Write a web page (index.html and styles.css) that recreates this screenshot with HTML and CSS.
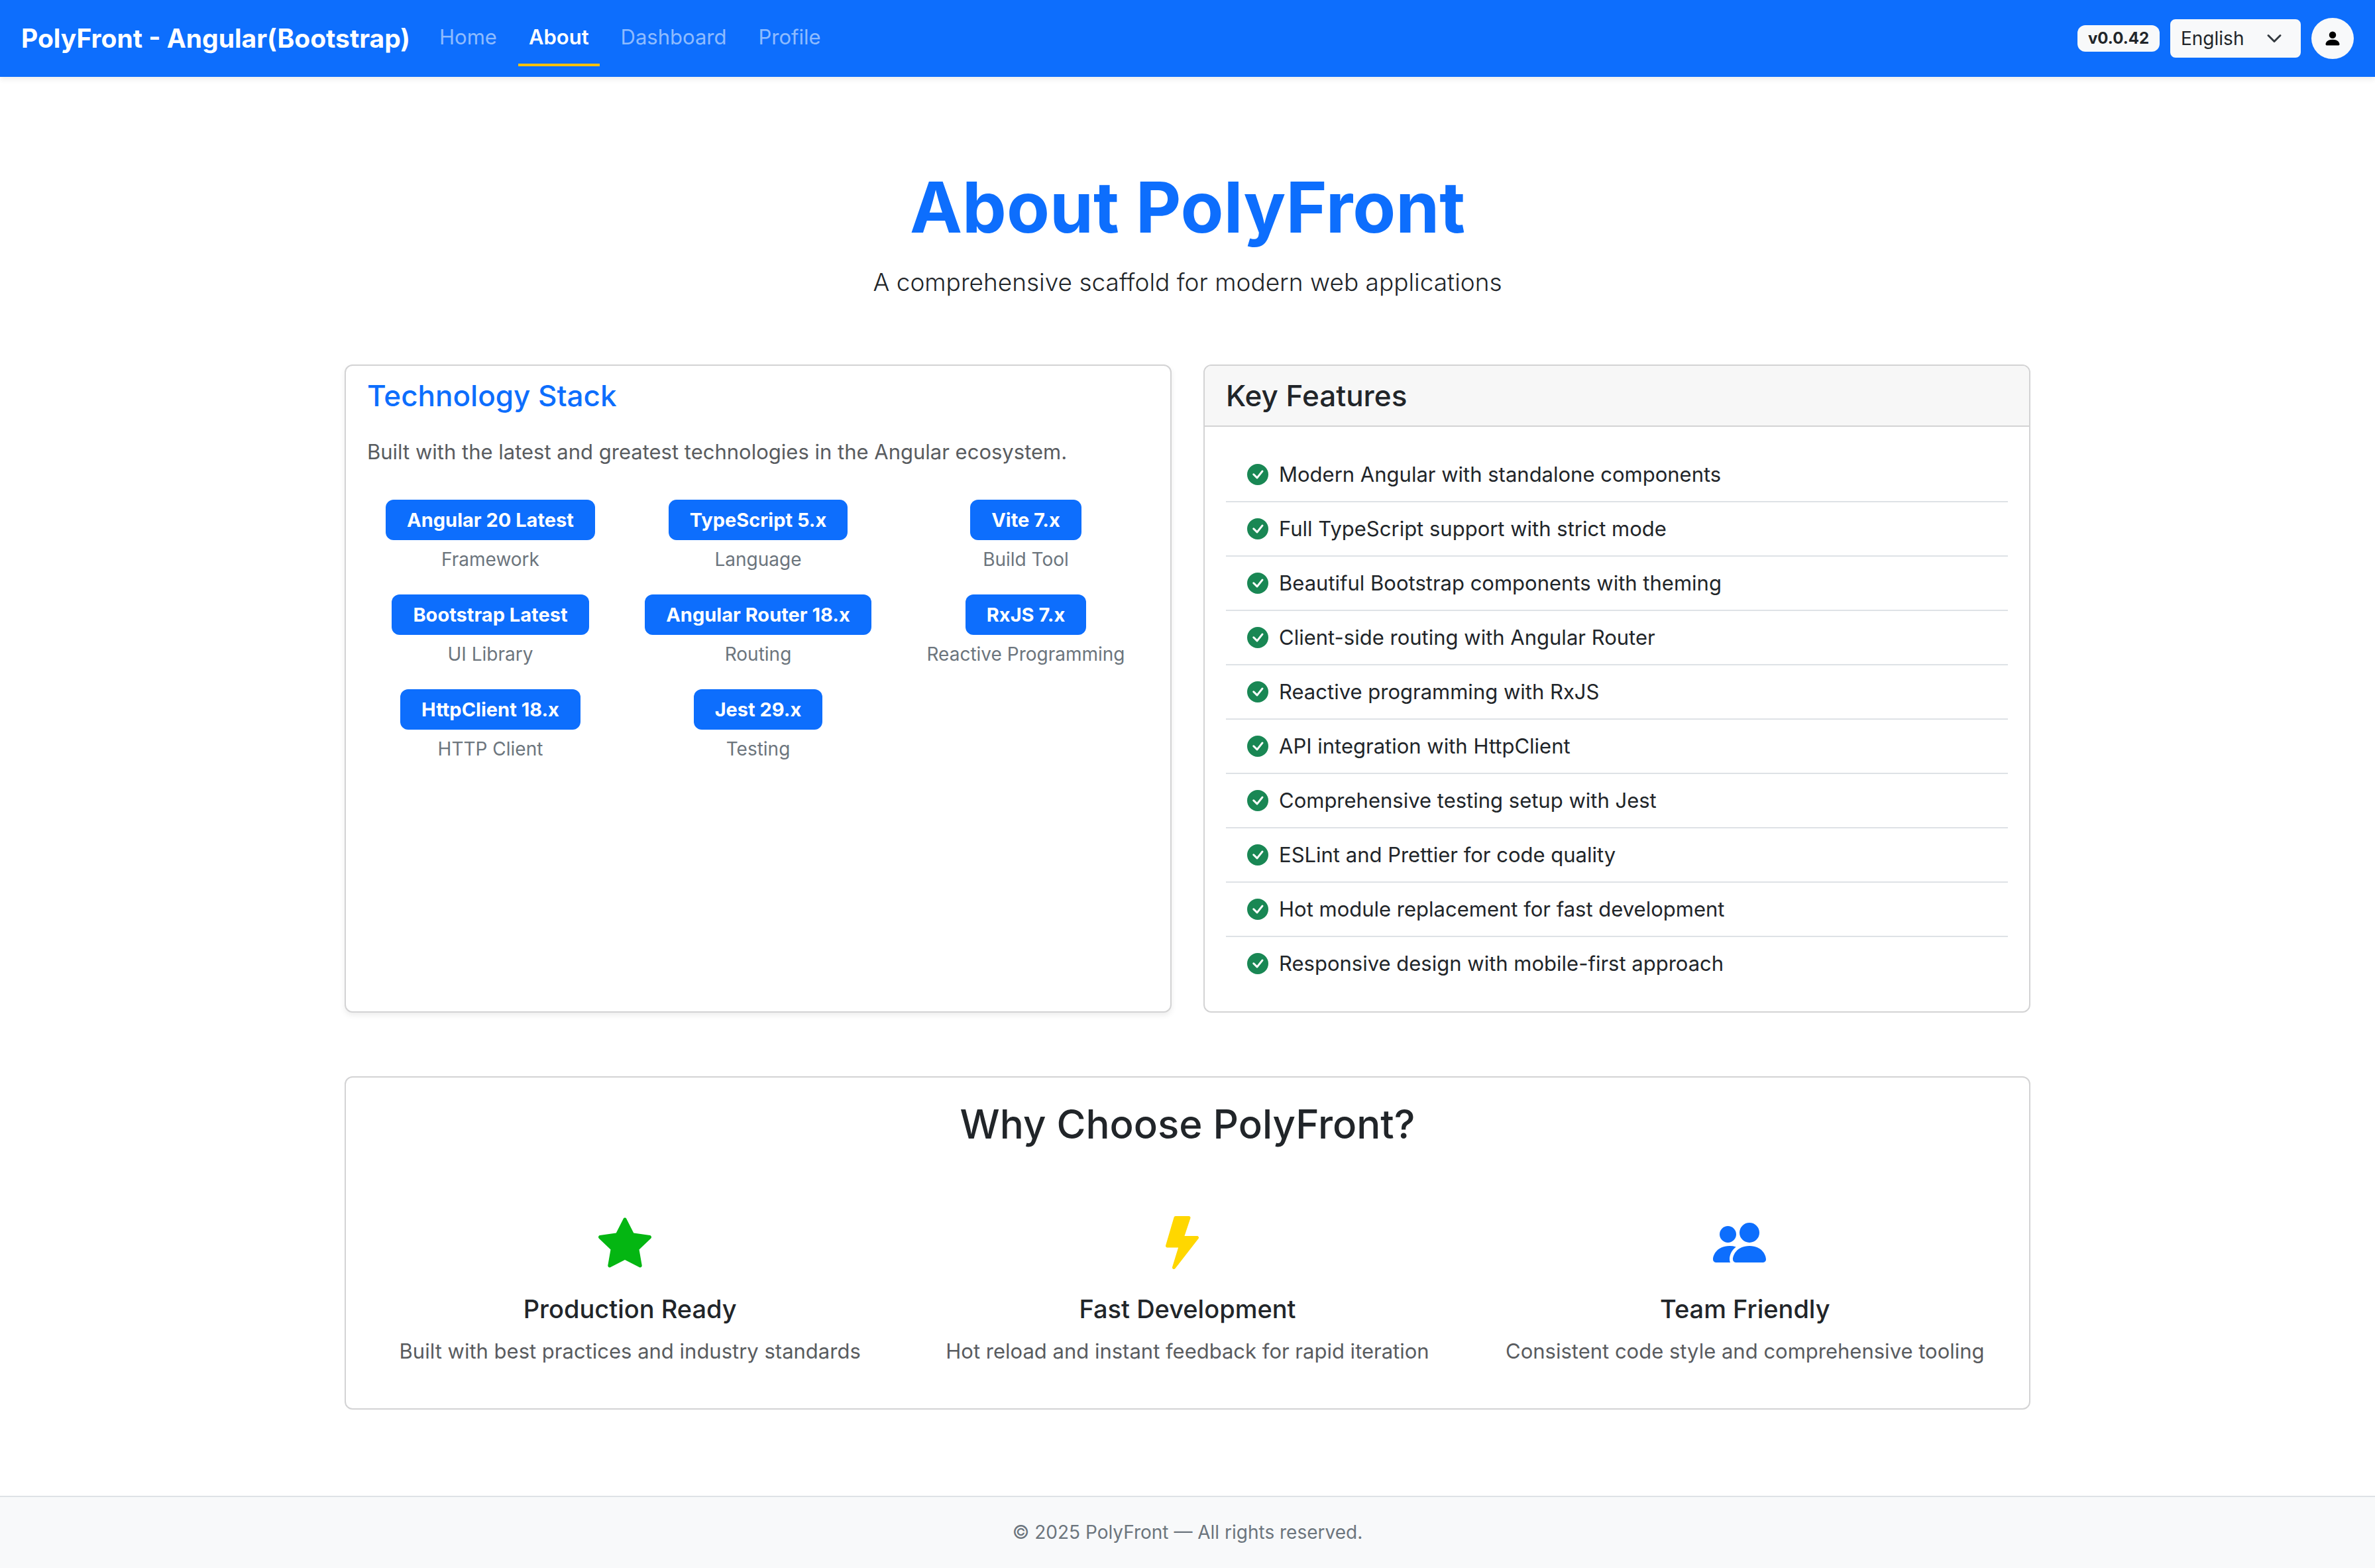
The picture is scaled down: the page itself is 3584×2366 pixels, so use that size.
FILE: index.html
```html
<!DOCTYPE html>
<html lang="en">
<head>
<meta charset="utf-8">
<meta name="viewport" content="width=device-width, initial-scale=1">
<title>About - PolyFront</title>
<link rel="stylesheet" href="styles.css">
</head>
<body>
<header class="navbar">
  <a class="brand" href="#">PolyFront - Angular(Bootstrap)</a>
  <nav class="nav" aria-label="Main">
    <a class="nav-link" href="#home">Home</a>
    <a class="nav-link active" href="#about" aria-current="page">About</a>
    <a class="nav-link" href="#dashboard">Dashboard</a>
    <a class="nav-link" href="#profile">Profile</a>
  </nav>
  <div class="tools">
    <span class="version">v0.0.42</span>
    <select class="language" aria-label="Language"><option>English</option></select>
    <button class="user" type="button" aria-label="User menu">
      <svg class="user-icon" viewBox="0 0 16 16" aria-hidden="true"><path d="M3 14s-1 0-1-1 1-4 6-4 6 3 6 4-1 1-1 1zm5-6a3 3 0 1 0 0-6 3 3 0 0 0 0 6"/></svg>
    </button>
  </div>
</header>

<svg class="sprite" aria-hidden="true">
  <symbol id="check" viewBox="0 0 16 16"><path d="M16 8A8 8 0 1 1 0 8a8 8 0 0 1 16 0m-3.97-3.03a.75.75 0 0 0-1.08.022L7.477 9.417 5.384 7.323a.75.75 0 0 0-1.06 1.06L6.97 11.03a.75.75 0 0 0 1.079-.02l3.992-4.99a.75.75 0 0 0-.01-1.05z"/></symbol>
</svg>

<main class="page">
  <section class="hero">
    <h1 class="hero-title">About PolyFront</h1>
    <p class="lead">A comprehensive scaffold for modern web applications</p>
  </section>

  <div class="cards">
    <section class="card card-raised">
      <h2 class="card-title card-title-primary">Technology Stack</h2>
      <div class="stack-body">
        <p class="text-muted">Built with the latest and greatest technologies in the Angular ecosystem.</p>
        <ul class="stack">
          <li class="stack-item"><span class="badge">Angular 20 Latest</span><small class="stack-label">Framework</small></li>
          <li class="stack-item"><span class="badge">TypeScript 5.x</span><small class="stack-label">Language</small></li>
          <li class="stack-item"><span class="badge">Vite 7.x</span><small class="stack-label">Build Tool</small></li>
          <li class="stack-item"><span class="badge">Bootstrap Latest</span><small class="stack-label">UI Library</small></li>
          <li class="stack-item"><span class="badge">Angular Router 18.x</span><small class="stack-label">Routing</small></li>
          <li class="stack-item"><span class="badge">RxJS 7.x</span><small class="stack-label">Reactive Programming</small></li>
          <li class="stack-item"><span class="badge">HttpClient 18.x</span><small class="stack-label">HTTP Client</small></li>
          <li class="stack-item"><span class="badge">Jest 29.x</span><small class="stack-label">Testing</small></li>
        </ul>
      </div>
    </section>

    <section class="card">
      <h2 class="card-title card-header">Key Features</h2>
      <ul class="features">
        <li class="feature"><svg class="check" aria-hidden="true"><use href="#check"/></svg><span>Modern Angular with standalone components</span></li>
        <li class="feature"><svg class="check" aria-hidden="true"><use href="#check"/></svg><span>Full TypeScript support with strict mode</span></li>
        <li class="feature"><svg class="check" aria-hidden="true"><use href="#check"/></svg><span>Beautiful Bootstrap components with theming</span></li>
        <li class="feature"><svg class="check" aria-hidden="true"><use href="#check"/></svg><span>Client-side routing with Angular Router</span></li>
        <li class="feature"><svg class="check" aria-hidden="true"><use href="#check"/></svg><span>Reactive programming with RxJS</span></li>
        <li class="feature"><svg class="check" aria-hidden="true"><use href="#check"/></svg><span>API integration with HttpClient</span></li>
        <li class="feature"><svg class="check" aria-hidden="true"><use href="#check"/></svg><span>Comprehensive testing setup with Jest</span></li>
        <li class="feature"><svg class="check" aria-hidden="true"><use href="#check"/></svg><span>ESLint and Prettier for code quality</span></li>
        <li class="feature"><svg class="check" aria-hidden="true"><use href="#check"/></svg><span>Hot module replacement for fast development</span></li>
        <li class="feature"><svg class="check" aria-hidden="true"><use href="#check"/></svg><span>Responsive design with mobile-first approach</span></li>
      </ul>
    </section>
  </div>

  <section class="card why">
    <h2 class="why-title">Why Choose PolyFront?</h2>
    <div class="reasons">
      <article class="reason">
        <svg class="reason-icon star" viewBox="0 0 16 16" aria-hidden="true"><path d="M3.612 15.443c-.386.198-.824-.149-.746-.592l.83-4.73L.173 6.765c-.329-.314-.158-.888.283-.95l4.898-.696L7.538.792c.197-.39.73-.39.927 0l2.184 4.327 4.898.696c.441.062.612.636.282.95l-3.522 3.356.83 4.73c.078.443-.36.79-.746.592L8 13.187l-4.389 2.256z"/></svg>
        <h3 class="reason-title">Production Ready</h3>
        <p class="text-muted">Built with best practices and industry standards</p>
      </article>
      <article class="reason">
        <svg class="reason-icon bolt" viewBox="0 0 16 16" aria-hidden="true"><path d="M5.52.359A.5.5 0 0 1 6 0h4a.5.5 0 0 1 .474.658L8.694 6H12.5a.5.5 0 0 1 .395.807l-7 9a.5.5 0 0 1-.873-.454L6.823 9.5H3.5a.5.5 0 0 1-.48-.641z"/></svg>
        <h3 class="reason-title">Fast Development</h3>
        <p class="text-muted">Hot reload and instant feedback for rapid iteration</p>
      </article>
      <article class="reason">
        <svg class="reason-icon people" viewBox="0 0 16 16" aria-hidden="true"><path d="M7 14s-1 0-1-1 1-4 5-4 5 3 5 4-1 1-1 1zm4-6a3 3 0 1 0 0-6 3 3 0 0 0 0 6m-5.784 6A2.24 2.24 0 0 1 5 13c0-1.355.68-2.75 1.936-3.72A6.3 6.3 0 0 0 5 9c-4 0-5 3-5 4s1 1 1 1zM4.5 8a2.5 2.5 0 1 0 0-5 2.5 2.5 0 0 0 0 5"/></svg>
        <h3 class="reason-title">Team Friendly</h3>
        <p class="text-muted">Consistent code style and comprehensive tooling</p>
      </article>
    </div>
  </section>
</main>

<footer class="footer">© 2025 PolyFront — All rights reserved.</footer>
</body>
</html>
```
FILE: styles.css
```css
:root {
  --primary: #0d6efd;
  --ink: #212529;
  --muted: #595c5f;
  --gray: #6c757d;
  --light: #f8f9fa;
  --line: #dee2e6;
  --card-line: #d3d3d4;
}

* {
  box-sizing: border-box;
  margin: 0;
  padding: 0;
}

body {
  display: flex;
  flex-direction: column;
  min-height: 100vh;
  background: #fff;
  color: var(--ink);
  font: 400 31px/48px Inter, "Liberation Sans", sans-serif;
}

ul {
  list-style: none;
}

svg {
  fill: currentColor;
}

.sprite {
  display: none;
}

/* Navigation bar */
.navbar {
  display: flex;
  flex-wrap: wrap;
  align-items: center;
  padding: 16px 32px;
  background: var(--primary);
  box-shadow: 0 4px 8px rgba(0, 0, 0, .075);
}

.brand {
  margin-right: 28px;
  color: #fff;
  font-size: 39px;
  font-weight: 700;
  line-height: 60px;
  text-decoration: none;
}

.nav {
  display: flex;
  flex-wrap: wrap;
  gap: 16px;
}

.nav-link {
  padding: 16px;
  border-bottom: 4px solid transparent;
  color: rgba(255, 255, 255, .55);
  text-decoration: none;
}

.nav-link.active {
  border-color: #ffc107;
  color: #fff;
  font-weight: 600;
}

.tools {
  display: flex;
  align-items: center;
  gap: 16px;
  margin-left: auto;
}

.version {
  padding: 8px 16px;
  border-radius: 12px;
  background: var(--light);
  font-size: 24px;
  font-weight: 700;
  line-height: 24px;
}

.language {
  appearance: none;
  width: 197px;
  height: 58px;
  padding: 0 14px;
  border: 2px solid var(--light);
  border-radius: 8px;
  background: var(--light) url("data:image/svg+xml,%3Csvg xmlns='http://www.w3.org/2000/svg' viewBox='0 0 16 16'%3E%3Cpath fill='none' stroke='%23343a40' stroke-linecap='round' stroke-linejoin='round' stroke-width='2' d='m2 5 6 6 6-6'/%3E%3C/svg%3E") no-repeat right 26px center / 24px 24px;
  color: var(--ink);
  font: 400 28px/42px Inter, "Liberation Sans", sans-serif;
}

.user {
  display: flex;
  align-items: center;
  justify-content: center;
  width: 64px;
  height: 62px;
  border: 0;
  border-radius: 50%;
  background: var(--light);
  color: #000;
}

.user-icon {
  width: 28px;
  height: 28px;
}

/* Page body */
.page {
  flex: 1;
  width: 100%;
  max-width: 2640px;
  margin: 0 auto;
  padding: 130px 48px 128px;
}

.hero {
  margin-bottom: 94px;
  text-align: center;
}

.hero-title {
  margin-bottom: 16px;
  color: var(--primary);
  font-size: 106px;
  font-weight: 700;
  line-height: 134px;
}

.lead {
  font-size: 37px;
  font-weight: 300;
  line-height: 60px;
}

.cards {
  display: grid;
  grid-template-columns: repeat(2, minmax(0, 1fr));
  gap: 48px;
  margin-bottom: 96px;
}

.card {
  border: 2px solid var(--card-line);
  border-radius: 12px;
  background: #fff;
}

.card-raised {
  box-shadow: 0 4px 8px rgba(0, 0, 0, .075);
}

.card-title {
  padding: 16px 32px;
  font-size: 44px;
  font-weight: 500;
  line-height: 58px;
}

.card-title-primary {
  padding-bottom: 0;
  color: var(--primary);
}

.card-header {
  border-bottom: 2px solid var(--card-line);
  border-radius: 10px 10px 0 0;
  background: #f7f7f7;
}

.text-muted {
  color: var(--muted);
}

.stack-body {
  padding: 32px;
}

.stack {
  display: grid;
  grid-template-columns: repeat(3, minmax(0, 1fr));
  gap: 32px;
  margin-top: 48px;
}

.stack-item {
  display: flex;
  flex-direction: column;
  align-items: center;
  gap: 8px;
}

.badge {
  padding: 16px 32px;
  border-radius: 12px;
  background: var(--primary);
  color: #fff;
  font-size: 29px;
  font-weight: 700;
  line-height: 29px;
  white-space: nowrap;
}

.stack-label {
  color: var(--gray);
  font-size: 28px;
  line-height: 42px;
}

.features {
  padding: 32px;
}

.feature {
  display: flex;
  align-items: center;
  gap: 16px;
  padding: 16px 32px;
  border-bottom: 2px solid var(--line);
}

.feature:last-child {
  border-bottom: 0;
}

.check {
  flex: none;
  width: 32px;
  height: 32px;
  color: #198754;
}

/* Reasons */
.why {
  padding: 32px 32px 62px;
  text-align: center;
}

.why-title {
  margin-bottom: 100px;
  font-size: 60px;
  font-weight: 500;
  line-height: 77px;
}

.reasons {
  display: grid;
  grid-template-columns: repeat(3, minmax(0, 1fr));
  gap: 48px;
}

.reason {
  display: flex;
  flex-direction: column;
  align-items: center;
}

.reason-icon {
  width: 80px;
  height: 80px;
  margin: 0 16px 36px 0;
}

.star {
  color: #04b612;
}

.bolt {
  color: #ffd700;
}

.people {
  color: var(--primary);
}

.reason-title {
  margin-bottom: 16px;
  font-size: 38px;
  font-weight: 500;
  line-height: 48px;
}

/* Footer */
.footer {
  padding: 32px 32px 33px;
  border-top: 2px solid var(--line);
  background: var(--light);
  color: var(--gray);
  font-size: 28px;
  line-height: 42px;
  text-align: center;
}

@media (max-width: 1600px) {
  .cards,
  .reasons {
    grid-template-columns: minmax(0, 1fr);
  }
}
```
